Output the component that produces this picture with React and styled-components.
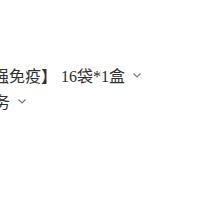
import React from "react";
import styled, { createGlobalStyle } from "styled-components";

const GlobalStyle = createGlobalStyle`
  html, body {
    margin: 0;
    padding: 0;
    background: #fff;
    overflow: hidden;
  }
`;

const Chevron = () => (
  <svg width="8" height="5" viewBox="0 0 8 5">
    <polyline points="0.5,0.5 4,4 7.5,0.5" fill="none" stroke="#777" strokeWidth="1.1" />
  </svg>
);

const App = () => {
  return (
    <>
      <GlobalStyle />
      <Page>
        <Row $shift={-39}>
          <Name>【增强免疫】</Name>
          <Count>16袋*1盒</Count>
          <Arrow $gap={8}>
            <Chevron />
          </Arrow>
        </Row>
        <Row $shift={-22}>
          <Name>服务</Name>
          <Arrow $gap={8}>
            <Chevron />
          </Arrow>
        </Row>
      </Page>
    </>
  );
};

const Page = styled.div`
  width: 200px;
  height: 200px;
  padding-top: 62px;
  box-sizing: border-box;
  display: flex;
  flex-direction: column;
  font-family: "Liberation Serif", "Noto Sans CJK SC", serif;
  font-size: 16px;
  color: #2e2e2e;
`;

const Row = styled.div`
  display: flex;
  align-items: center;
  height: 26px;
  margin-left: ${({ $shift }) => $shift}px;
  white-space: nowrap;
`;

const Name = styled.span``;

const Count = styled.span`
  margin-left: 4px;
`;

const Arrow = styled.span`
  display: flex;
  align-items: center;
  margin-left: ${({ $gap }) => $gap}px;
`;

export default App;
